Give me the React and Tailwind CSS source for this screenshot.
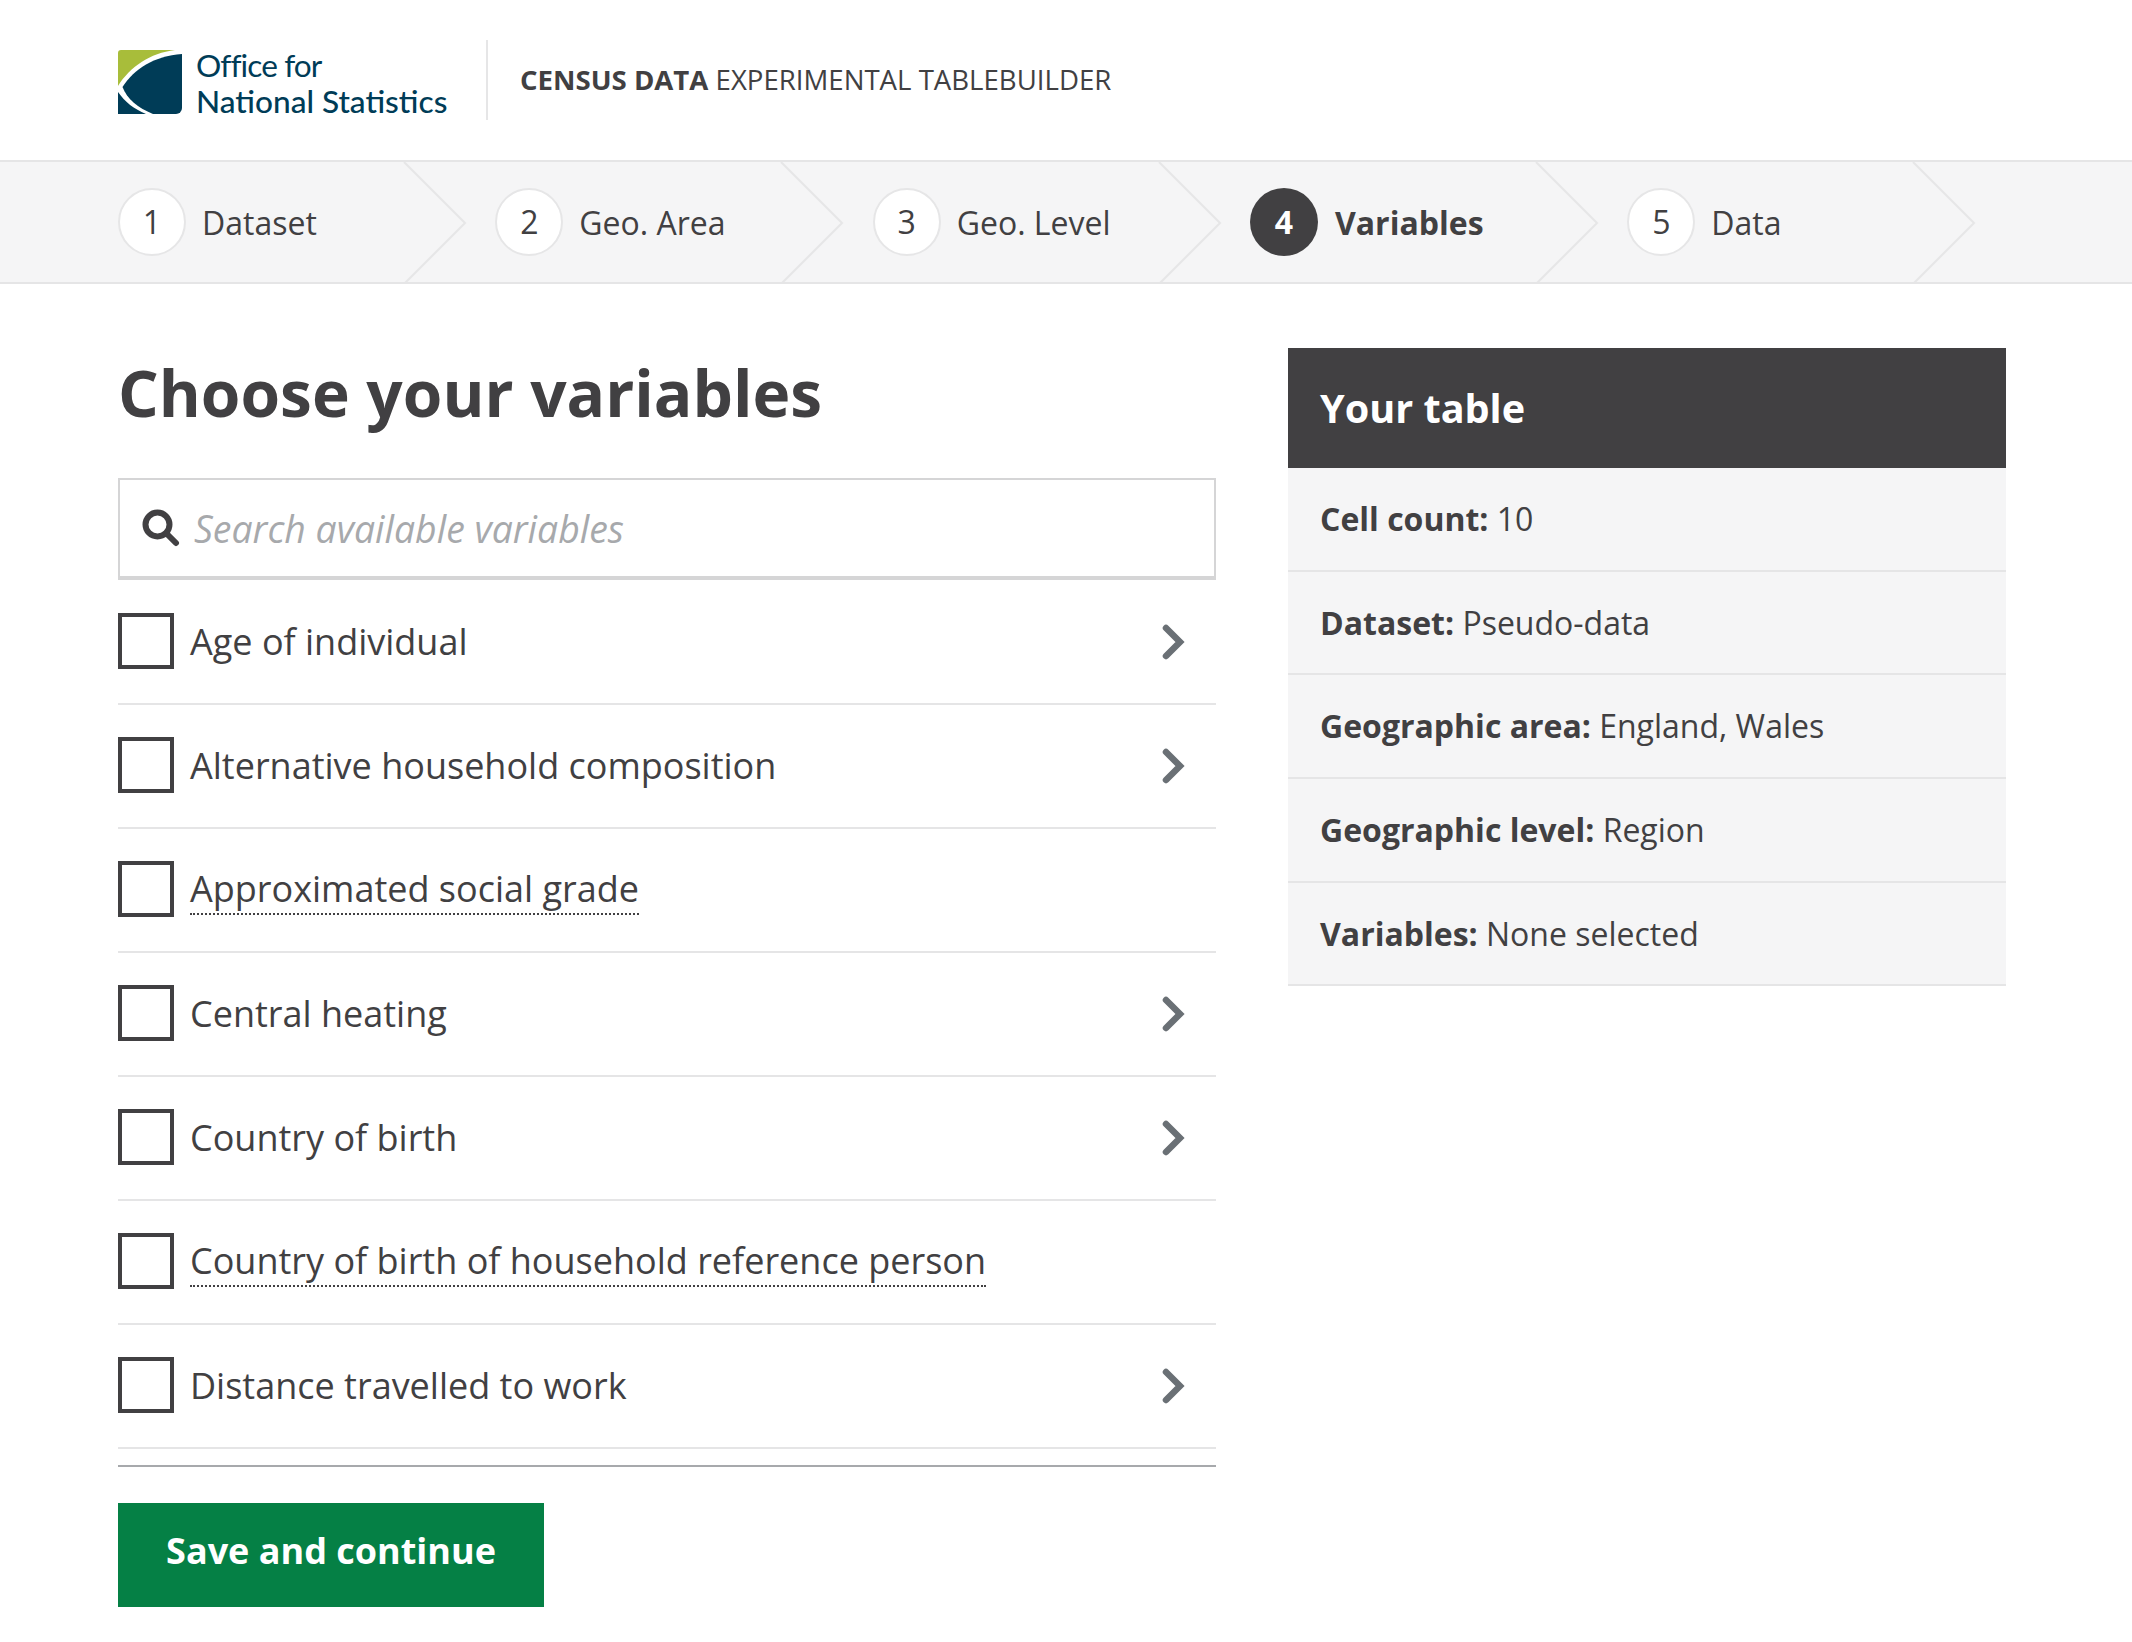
import React from "react";

const steps = [
    { n: 1, label: "Dataset" },
    { n: 2, label: "Geo. Area" },
    { n: 3, label: "Geo. Level" },
    { n: 4, label: "Variables", active: true },
    { n: 5, label: "Data" },
];

const variables = [
    { name: "Age of individual", more: true },
    { name: "Alternative household composition", more: true },
    { name: "Approximated social grade", note: true },
    { name: "Central heating", more: true },
    { name: "Country of birth", more: true },
    { name: "Country of birth of household reference person", note: true },
    { name: "Distance travelled to work", more: true },
];

const summary = [
    { key: "Cell count:", value: "10" },
    { key: "Dataset:", value: "Pseudo-data" },
    { key: "Geographic area:", value: "England, Wales" },
    { key: "Geographic level:", value: "Region" },
    { key: "Variables:", value: "None selected" },
];

function Logo() {
    return (
        <svg width="64" height="64" viewBox="0 0 64 64" className="shrink-0">
            <path d="M3 0H57C32 3 12 17 0 36V3a3 3 0 0 1 3-3z" fill="#a8bd3a" />
            <path d="M64 4V58a6 6 0 0 1-6 6H35C20 58 9 49 4.5 37C16 19 36 6 64 4z" fill="#003c57" />
            <path d="M0 42C7 52 16 59 28 64H0z" fill="#003c57" />
        </svg>
    );
}

function Step({ step }) {
    return (
        <div className="relative w-[377.33px] h-full flex items-center shrink-0">
            <div
                className={
                    step.active
                        ? "w-[68px] h-[68px] rounded-full bg-[#414042] text-white font-bold flex items-center justify-center text-[32px]"
                        : "w-[68px] h-[68px] rounded-full bg-white border-2 border-[#e6e6e7] flex items-center justify-center text-[32px]"
                }
            >
                {step.n}
            </div>
            <span className={step.active ? "ml-[17px] pt-[1px] text-[32px] font-bold" : "ml-[16px] pt-[1px] text-[32px]"}>{step.label}</span>
            <svg width="64" height="122" viewBox="0 0 64 122" className="absolute top-0 left-[285px]">
                <polyline points="1,0 62,61 1,122" fill="none" stroke="#e6e6e7" strokeWidth="2" />
            </svg>
        </div>
    );
}

function VariableRow({ item }) {
    return (
        <div className="h-[124px] border-b-2 border-[#e5e5e6] flex items-center">
            <div className="w-[56px] h-[56px] mb-[2px] border-4 border-[#414042] shrink-0 bg-white"></div>
            <span className={item.note ? "ml-[16px] text-[36px] leading-[48px] border-b-2 border-dotted border-[#414042]" : "ml-[16px] text-[36px] leading-[48px]"}>
                {item.name}
            </span>
            {item.more && (
                <svg width="24" height="36" viewBox="0 0 24 36" className="ml-auto mr-[30px]">
                    <polyline points="4,4 18,18 4,32" fill="none" stroke="#6a7075" strokeWidth="6.5" strokeLinecap="round" strokeLinejoin="miter" />
                </svg>
            )}
        </div>
    );
}

export default function App() {
    return (
        <div className="min-h-[1642px] bg-white text-[#414042] font-['Open_Sans',sans-serif]">
            <header className="h-[160px] px-[118px] flex items-center">
                <div className="mt-[4px] shrink-0">
                    <Logo />
                </div>
                <div className="ml-[14px] w-[290px] mt-[6px] text-[#003c57] font-['Lato',sans-serif] text-[31.6px] leading-[36px]">
                    <div className="font-normal tracking-[-0.9px]">Office for</div>
                    <div className="font-medium">National Statistics</div>
                </div>
                <div className="w-[2px] h-[80px] bg-[#e6e6e7]"></div>
                <div className="ml-[32px] text-[27.6px] uppercase">
                    <span className="font-bold">Census Data</span> Experimental Tablebuilder
                </div>
            </header>

            <nav className="h-[124px] bg-[#f5f5f6] border-y-2 border-[#e5e5e6] px-[118px] flex items-center overflow-hidden">
                {steps.map((step) => (
                    <Step key={step.n} step={step} />
                ))}
            </nav>

            <main className="px-[118px] pt-[64px] flex gap-[72px] items-start">
                <div className="w-[1098px] shrink-0">
                    <h1 className="text-[64px] leading-[90px] font-bold mb-[40px]">Choose your variables</h1>

                    <div className="h-[102px] border-2 border-b-4 border-[#d5d5d6] flex items-center pl-[22px]">
                        <svg width="38" height="38" viewBox="0 0 38 38" className="shrink-0">
                            <circle cx="15.5" cy="15.5" r="12" fill="none" stroke="#414042" strokeWidth="6" />
                            <line x1="24.5" y1="24.5" x2="34" y2="34" stroke="#414042" strokeWidth="6" strokeLinecap="round" />
                        </svg>
                        <input
                            type="text"
                            placeholder="Search available variables"
                            className="ml-[14px] mt-[2px] flex-1 text-[37.4px] italic bg-transparent outline-none placeholder:text-[#a7a9ac]"
                        />
                    </div>

                    <div className="pt-[1px] border-b-2 border-[#a7a9ac] pb-[16px]">
                        {variables.map((item) => (
                            <VariableRow key={item.name} item={item} />
                        ))}
                    </div>

                    <button className="mt-[36px] pb-[8px] w-[426px] h-[104px] bg-[#058045] text-white text-[36px] font-bold">
                        Save and continue
                    </button>
                </div>

                <aside className="w-[718px] shrink-0">
                    <h2 className="h-[120px] pt-[1px] bg-[#414042] text-white text-[39.6px] font-bold flex items-center px-[32px]">Your table</h2>
                    {summary.map((row) => (
                        <div key={row.key} className="h-[103.7px] bg-[#f5f5f6] border-b-2 border-[#e5e5e6] flex items-center px-[32px] text-[32px]">
                            <p>
                                <span className="font-bold">{row.key}</span> {row.value}
                            </p>
                        </div>
                    ))}
                </aside>
            </main>
        </div>
    );
}
